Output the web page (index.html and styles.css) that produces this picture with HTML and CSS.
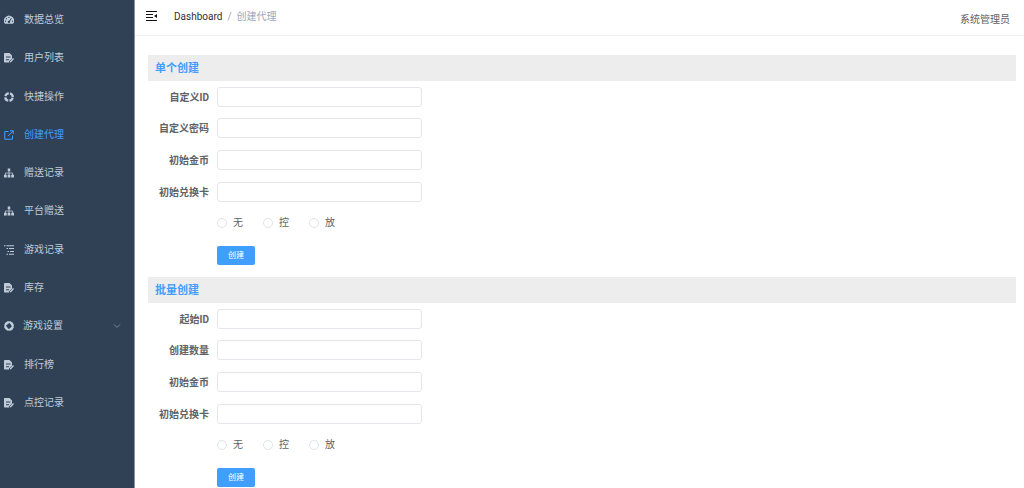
FILE: index.html
```html
<!DOCTYPE html>
<html lang="zh-CN">
<head>
<meta charset="utf-8">
<meta name="viewport" content="width=device-width, initial-scale=1">
<title>创建代理</title>
<link rel="stylesheet" href="styles.css">
</head>
<body>
<svg class="sprite" aria-hidden="true">
  <symbol id="i-gauge" viewBox="0 0 20 20"><path fill="currentColor" fill-rule="evenodd" d="M2 17.500A10 10 0 1 1 18 17.500ZM10 3.500a1.300 1.300 0 1 0 0 2.600a1.300 1.300 0 0 0 0-2.600ZM4.800 6a1.300 1.300 0 1 0 0 2.600a1.300 1.300 0 0 0 0-2.600ZM3.200 11a1.300 1.300 0 1 0 0 2.600a1.300 1.300 0 0 0 0-2.600ZM16.800 11a1.300 1.300 0 1 0 0 2.600a1.300 1.300 0 0 0 0-2.600ZM14.300 6L10.300 11.500A2.300 2.300 0 1 0 12 12.700L15.600 6.700Z"/></symbol>
  <symbol id="i-doc" viewBox="0 0 20 20"><path fill="currentColor" fill-rule="evenodd" d="M1.500 0H11L16 5V11L10 17V19H1.500A1.500 1.500 0 0 1 0 17.500V1.500A1.500 1.500 0 0 1 1.500 0ZM4 7V9H13V7ZM4 12.500V14.500H10V12.500Z"/><path fill="currentColor" d="M12 16.500L18 10L20 12L14 18.500L11.500 19Z"/></symbol>
  <symbol id="i-ring" viewBox="0 0 20 20"><circle cx="10" cy="10" r="7.500" fill="none" stroke="currentColor" stroke-width="4.500" stroke-dasharray="9.280 2.500" stroke-dashoffset="-1.250"/></symbol>
  <symbol id="i-ring-full" viewBox="0 0 20 20"><circle cx="10" cy="10" r="7.700" fill="none" stroke="currentColor" stroke-width="3.600"/><circle cx="10" cy="10" r="7.200" fill="none" stroke="currentColor" stroke-width="5" stroke-dasharray="7.810 3.500" stroke-dashoffset="-1.750"/></symbol>
  <symbol id="i-link" viewBox="0 0 20 20"><path fill="none" stroke="currentColor" stroke-width="2" d="M9 3H1.500V18.500H17V11M8 12L18 2M12 1.500H18.500V8"/></symbol>
  <symbol id="i-tree" viewBox="0 0 20 20"><path fill="currentColor" d="M7.500 1H12.500V6.500H7.500ZM0 13.500H5.500V19H0ZM7.300 13.500H12.700V19H7.300ZM14.500 13.500H20V19H14.500Z"/><path fill="none" stroke="currentColor" stroke-width="1.600" d="M10 6V14M2.800 14V10H17.200V14"/></symbol>
  <symbol id="i-list" viewBox="0 0 20 20"><path fill="none" stroke="currentColor" stroke-width="2.400" d="M0 1.500H3M5 1.500H20M5 7H8M10 7H20M7 13H10M12 13H20M5 18.500H8M10 18.500H20"/></symbol>
  <symbol id="i-fold" viewBox="0 0 22 20"><path fill="none" stroke="currentColor" stroke-width="2" d="M0 1H22M0 7H14M0 13H14M0 19H22"/><path fill="currentColor" d="M22 6V14L16 10Z"/></symbol>
</svg>
<div class="app">
  <nav class="sidebar">
    <ul class="menu">
      <li><a class="item" href="#"><svg class="icon"><use href="#i-gauge"/></svg>数据总览</a></li>
      <li><a class="item" href="#"><svg class="icon"><use href="#i-doc"/></svg>用户列表</a></li>
      <li><a class="item" href="#"><svg class="icon"><use href="#i-ring"/></svg>快捷操作</a></li>
      <li><a class="item active" href="#" aria-current="page"><svg class="icon"><use href="#i-link"/></svg>创建代理</a></li>
      <li><a class="item" href="#"><svg class="icon"><use href="#i-tree"/></svg>赠送记录</a></li>
      <li><a class="item" href="#"><svg class="icon"><use href="#i-tree"/></svg>平台赠送</a></li>
      <li><a class="item" href="#"><svg class="icon"><use href="#i-list"/></svg>游戏记录</a></li>
      <li><a class="item" href="#"><svg class="icon"><use href="#i-doc"/></svg>库存</a></li>
      <li><button class="item submenu" type="button" aria-expanded="false"><svg class="icon"><use href="#i-ring-full"/></svg>游戏设置<svg class="chevron" viewBox="0 0 8 8"><path d="M1 2.500L4 5.500L7 2.500"/></svg></button></li>
      <li><a class="item" href="#"><svg class="icon"><use href="#i-doc"/></svg>排行榜</a></li>
      <li><a class="item" href="#"><svg class="icon"><use href="#i-doc"/></svg>点控记录</a></li>
    </ul>
  </nav>
  <div class="page">
    <header class="topbar">
      <button class="fold" type="button" aria-label="折叠菜单"><svg class="fold-icon"><use href="#i-fold"/></svg></button>
      <nav class="crumbs"><a href="#">Dashboard</a><span class="sep">/</span><span>创建代理</span></nav>
      <span class="user">系统管理员</span>
    </header>
    <main class="content">
      <section>
        <h2 class="title">单个创建</h2>
        <form class="form">
          <div class="row"><label class="label" for="a1">自定义ID</label><input class="field" id="a1" type="text"></div>
          <div class="row"><label class="label" for="a2">自定义密码</label><input class="field" id="a2" type="text"></div>
          <div class="row"><label class="label" for="a3">初始金币</label><input class="field" id="a3" type="text"></div>
          <div class="row"><label class="label" for="a4">初始兑换卡</label><input class="field" id="a4" type="text"></div>
          <div class="row"><div class="options">
            <label class="option"><input class="radio" type="radio" name="a">无</label>
            <label class="option"><input class="radio" type="radio" name="a">控</label>
            <label class="option"><input class="radio" type="radio" name="a">放</label>
          </div></div>
          <div class="row"><button class="submit" type="button">创建</button></div>
        </form>
      </section>
      <section>
        <h2 class="title">批量创建</h2>
        <form class="form">
          <div class="row"><label class="label" for="b1">起始ID</label><input class="field" id="b1" type="text"></div>
          <div class="row"><label class="label" for="b2">创建数量</label><input class="field" id="b2" type="text"></div>
          <div class="row"><label class="label" for="b3">初始金币</label><input class="field" id="b3" type="text"></div>
          <div class="row"><label class="label" for="b4">初始兑换卡</label><input class="field" id="b4" type="text"></div>
          <div class="row"><div class="options">
            <label class="option"><input class="radio" type="radio" name="b">无</label>
            <label class="option"><input class="radio" type="radio" name="b">控</label>
            <label class="option"><input class="radio" type="radio" name="b">放</label>
          </div></div>
          <div class="row"><button class="submit" type="button">创建</button></div>
        </form>
      </section>
    </main>
  </div>
</div>
</body>
</html>
```
FILE: styles.css
```css
* { box-sizing: border-box; }
body {
  margin: 0;
  background: #fff;
  color: #606266;
  font: 10px/16px Roboto, "Noto Sans CJK SC", sans-serif;
}
button, input { font: inherit; }
a { color: inherit; text-decoration: none; }
.sprite { display: none; }
.app { display: flex; min-height: 100vh; }

.sidebar {
  flex: 0 0 135px;
  background: #304156;
  border-right: 1px solid #8a949f;
}
.menu {
  display: grid;
  grid-auto-rows: 1fr;
  min-height: 422px;
  margin: 0;
  padding: 1px 0 0;
  list-style: none;
}
.item {
  display: flex;
  align-items: center;
  gap: 10px;
  width: 100%;
  height: 100%;
  padding: 0 13px 0 4px;
  border: 0;
  background: none;
  color: #bfcbd9;
  text-align: left;
}
.item.active { color: #409eff; }
.icon { flex: none; width: 10px; height: 10px; }
.submenu { gap: 9px; }
.chevron {
  width: 8px;
  height: 8px;
  margin-left: auto;
  fill: none;
  stroke: #77859a;
}

.page { flex: 1; min-width: 0; }
.topbar {
  display: flex;
  align-items: center;
  height: 36px;
  padding: 0 14px 3px 11px;
  border-bottom: 1px solid #f0f0f0;
}
.fold {
  display: flex;
  padding: 0;
  border: 0;
  background: none;
  color: #111;
}
.fold-icon { width: 11px; height: 10px; }
.crumbs {
  display: flex;
  margin-left: 17px;
  padding-top: 2px;
  color: #97a8be;
}
.crumbs a { color: #303133; }
.sep { margin: 0 5px; color: #a0a6b0; }
.user { margin-left: auto; padding-top: 8px; }

.content { padding: 19px 8px 0 13px; }
.title {
  margin: 0;
  padding: 2px 7px 0;
  background: #ededed;
  color: #409eff;
  font-size: 11px;
  font-weight: 700;
  line-height: 24px;
}
.form {
  display: grid;
  grid-auto-rows: 1fr;
  min-height: 190px;
  margin-bottom: 6px;
}
.row {
  display: grid;
  grid-template-columns: 61px minmax(0, 205px);
  column-gap: 8px;
  align-items: center;
}
.label {
  padding-top: 2px;
  font-weight: 700;
  text-align: right;
  white-space: nowrap;
}
.field {
  width: 100%;
  height: 20px;
  padding: 0 8px;
  border: 1px solid #e4e6eb;
  border-radius: 3px;
  background: #fff;
}
.options { display: flex; grid-column: 2; gap: 20px; }
.option { display: flex; align-items: center; gap: 6px; }
.radio {
  appearance: none;
  width: 10px;
  height: 10px;
  margin: 0;
  border: 1px solid #e0e3e9;
  border-radius: 50%;
  background: #fff;
}
.radio:checked { border: 3px solid #409eff; }
.submit {
  grid-column: 2;
  justify-self: start;
  width: 38px;
  height: 19px;
  padding: 1px 0 0;
  border: 0;
  border-radius: 2px;
  background: #409eff;
  color: #fff;
  font-size: 8px;
}
```
